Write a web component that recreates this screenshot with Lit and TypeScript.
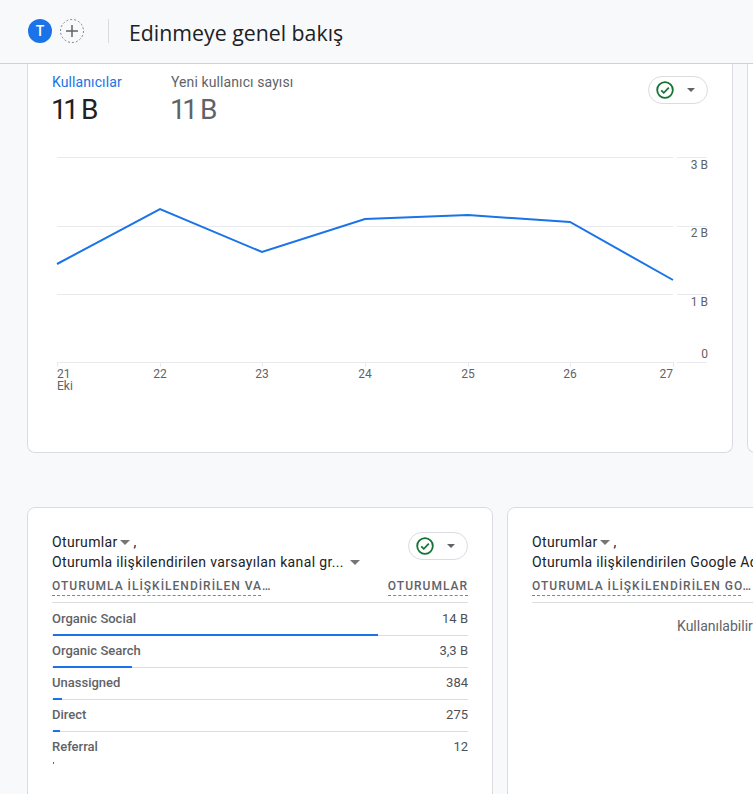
import { LitElement, html, css, svg } from 'lit';
import { customElement } from 'lit/decorators.js';

const ROWS = [
  { name: 'Organic Social', value: '14 B', bar: 325 },
  { name: 'Organic Search', value: '3,3 B', bar: 79 },
  { name: 'Unassigned', value: '384', bar: 9 },
  { name: 'Direct', value: '275', bar: 7 },
  { name: 'Referral', value: '12', bar: 1 },
];

const POINTS = '5,107 108,52 210,95 313,62 416,58 518,65 621,123';
const GRID_Y = [0, 69, 137, 205];
const TICKS = [5, 108, 210, 313, 416, 518, 621];
const DAYS = ['21', '22', '23', '24', '25', '26', '27'];
const Y_LABELS = [
  { text: '3 B', y: 12 },
  { text: '2 B', y: 80 },
  { text: '1 B', y: 149 },
  { text: '0', y: 201 },
];

@customElement('app-root')
export class AppRoot extends LitElement {
  static styles = css`
    :host {
      display: block;
      width: 753px;
      height: 794px;
      overflow: hidden;
      background: #f8f9fa;
      font-family: Roboto, 'Liberation Sans', sans-serif;
      color: #202124;
    }

    .header {
      display: flex;
      align-items: center;
      height: 62px;
      padding: 0 0 1px 28px;
      border-bottom: 1px solid #cfd1d4;
    }
    .avatar {
      width: 24px;
      height: 24px;
      border-radius: 50%;
      background: #1a73e8;
      color: #fff;
      font-size: 14px;
      font-weight: 500;
      display: flex;
      align-items: center;
      justify-content: center;
    }
    .add {
      width: 24px;
      height: 24px;
      margin-left: 8px;
      display: block;
    }
    .divider {
      width: 1px;
      height: 24px;
      background: #dadce0;
      margin: 0 20px 0 24px;
    }
    .title {
      font-family: 'Open Sans', sans-serif;
      font-size: 21.3px;
      line-height: 28px;
      margin-top: 4px;
    }

    .top-row {
      display: flex;
      gap: 14px;
      padding-left: 27px;
    }
    .chart-card {
      flex: none;
      width: 706px;
      height: 389px;
      box-sizing: border-box;
      background: #fff;
      border: 1px solid #dadce0;
      border-top: none;
      border-radius: 0 0 8px 8px;
      padding: 9px 24px 0 24px;
    }
    .stub {
      flex: none;
      width: 40px;
      height: 389px;
      box-sizing: border-box;
      background: #fff;
      border: 1px solid #dadce0;
      border-top: none;
      border-radius: 0 0 0 8px;
    }
    .metrics {
      display: flex;
      align-items: flex-start;
    }
    .metric {
      width: 119px;
      white-space: nowrap;
    }
    .metric-label {
      font-size: 14px;
      line-height: 19px;
      letter-spacing: 0.1px;
      color: #5f6368;
    }
    .metric-label.active {
      color: #1a73e8;
    }
    .metric-value {
      font-size: 28px;
      line-height: 36px;
      letter-spacing: -3.5px;
      word-spacing: 2px;
      margin-left: -1px;
      color: #5f6368;
    }
    .metric-value.active {
      color: #202124;
    }
    .metrics .pill {
      margin-left: auto;
      margin-top: 3px;
    }

    .pill {
      display: flex;
      align-items: center;
      flex: none;
      width: 60px;
      height: 28px;
      box-sizing: border-box;
      border: 1px solid #dadce0;
      border-radius: 14px;
      padding-left: 7px;
    }
    .pill svg {
      display: block;
    }
    .caret {
      display: inline-block;
      width: 0;
      height: 0;
      border-left: 5px solid transparent;
      border-right: 5px solid transparent;
      border-top: 5px solid #757575;
    }
    .pill .caret {
      border-left-width: 4.5px;
      border-right-width: 4.5px;
      border-top-width: 4.5px;
      border-top-color: #5f6368;
      margin-left: 13px;
    }

    .chart {
      display: block;
      margin-top: 29px;
    }
    .chart text {
      font-family: Roboto, sans-serif;
      font-size: 12px;
      fill: #5f6368;
    }

    .bottom-row {
      display: flex;
      gap: 14px;
      padding: 54px 0 0 27px;
    }
    .card {
      flex: none;
      width: 466px;
      height: 320px;
      box-sizing: border-box;
      background: #fff;
      border: 1px solid #dadce0;
      border-radius: 8px;
      padding: 24px 24px 0 24px;
    }
    .card-head {
      display: flex;
      justify-content: space-between;
      height: 47px;
    }
    .card-title {
      font-size: 14px;
      line-height: 20px;
      letter-spacing: 0.35px;
      white-space: nowrap;
      color: #202124;
    }
    .card-title .caret {
      vertical-align: 2px;
      margin: 0 4px 0 2px;
    }
    .card-title .wide {
      margin: 0 0 0 2px;
    }
    .columns {
      display: flex;
      justify-content: space-between;
      height: 24px;
      box-sizing: border-box;
      border-bottom: 1px solid #dadce0;
      white-space: nowrap;
    }
    .col-name {
      display: inline-block;
      height: 16px;
      font-size: 12px;
      font-weight: 500;
      line-height: 14px;
      letter-spacing: 1px;
      color: #5f6368;
      border-bottom: 1px dashed #80868b;
    }
    .col-name.cut {
      width: 209px;
    }
    .row {
      position: relative;
      display: flex;
      justify-content: space-between;
      height: 32px;
      box-sizing: border-box;
      padding-top: 7px;
      border-bottom: 1px solid #dadce0;
      font-size: 13px;
      line-height: 16px;
      color: #4d5156;
    }
    .columns + .row {
      height: 33px;
      padding-top: 8px;
    }
    .row.last {
      border-bottom: none;
    }
    .row-name {
      font-weight: 500;
      color: #5f6368;
    }
    .bar {
      position: absolute;
      left: 1px;
      bottom: -1px;
      height: 2px;
      background: #1a73e8;
    }
    .row.last .bar {
      bottom: 0;
    }
    .empty {
      font-size: 14px;
      line-height: 20px;
      color: #5f6368;
      padding: 13px 0 0 145px;
      white-space: nowrap;
    }
  `;

  private checkPill() {
    return html`<div class="pill">
      <svg width="18" height="18" viewBox="0 0 18 18" fill="none">
        <circle cx="9" cy="9" r="7.8" stroke="#137333" stroke-width="1.8"></circle>
        <path d="M5.2 9.3l2.6 2.6 5-5.2" stroke="#137333" stroke-width="1.7"></path>
      </svg>
      <span class="caret"></span>
    </div>`;
  }

  private chart() {
    return html`<svg class="chart" width="656" height="240" viewBox="0 0 656 240">
      ${GRID_Y.map(
        (y) => svg`
          <line x1="5" x2="621" y1=${y + 0.5} y2=${y + 0.5} stroke="#e8eaed"></line>
          <line x1="625" x2="655" y1=${y + 0.5} y2=${y + 0.5} stroke="#e8eaed"></line>`
      )}
      ${TICKS.map(
        (x) => svg`<line x1=${x + 0.5} x2=${x + 0.5} y1="205" y2="210" stroke="#e8eaed"></line>`
      )}
      <polyline points=${POINTS} fill="none" stroke="#1a73e8" stroke-width="2"></polyline>
      ${Y_LABELS.map(
        (l) => svg`<text x="656" y=${l.y} text-anchor="end">${l.text}</text>`
      )}
      ${DAYS.map((d, i) => {
        if (i === 0) return svg`<text x="5" y="221">${d}</text>`;
        if (i === DAYS.length - 1) return svg`<text x=${TICKS[i]} y="221" text-anchor="end">${d}</text>`;
        return svg`<text x=${TICKS[i]} y="221" text-anchor="middle">${d}</text>`;
      })}
      <text x="5" y="233">Eki</text>
    </svg>`;
  }

  render() {
    return html`
      <div class="header">
        <div class="avatar">T</div>
        <svg class="add" viewBox="0 0 24 24" fill="none">
          <circle cx="12" cy="12" r="11.5" stroke="#80868b" stroke-dasharray="2 2"></circle>
          <path d="M12 6v12M6 12h12" stroke="#5f6368" stroke-width="1.5"></path>
        </svg>
        <div class="divider"></div>
        <div class="title">Edinmeye genel bakış</div>
      </div>

      <div class="top-row">
        <div class="chart-card">
          <div class="metrics">
            <div class="metric">
              <div class="metric-label active">Kullanıcılar</div>
              <div class="metric-value active">11 B</div>
            </div>
            <div class="metric">
              <div class="metric-label">Yeni kullanıcı sayısı</div>
              <div class="metric-value">11 B</div>
            </div>
            ${this.checkPill()}
          </div>
          ${this.chart()}
        </div>
        <div class="stub"></div>
      </div>

      <div class="bottom-row">
        <div class="card">
          <div class="card-head">
            <div class="card-title">
              Oturumlar<span class="caret"></span>,<br />
              Oturumla ilişkilendirilen varsayılan kanal gr...
              <span class="caret wide"></span>
            </div>
            ${this.checkPill()}
          </div>
          <div class="columns">
            <span class="col-name cut">OTURUMLA İLİŞKİLENDİRİLEN VA…</span>
            <span class="col-name">OTURUMLAR</span>
          </div>
          ${ROWS.map(
            (r, i) => html`<div class="row ${i === ROWS.length - 1 ? 'last' : ''}">
              <span class="row-name">${r.name}</span>
              <span>${r.value}</span>
              <div class="bar" style="width:${r.bar}px"></div>
            </div>`
          )}
        </div>
        <div class="card">
          <div class="card-head">
            <div class="card-title">
              Oturumlar<span class="caret"></span>,<br />
              Oturumla ilişkilendirilen Google Ads kampanyası
            </div>
          </div>
          <div class="columns">
            <span class="col-name cut">OTURUMLA İLİŞKİLENDİRİLEN GO…</span>
          </div>
          <div class="empty">Kullanılabilir veri yok</div>
        </div>
      </div>
    `;
  }
}
